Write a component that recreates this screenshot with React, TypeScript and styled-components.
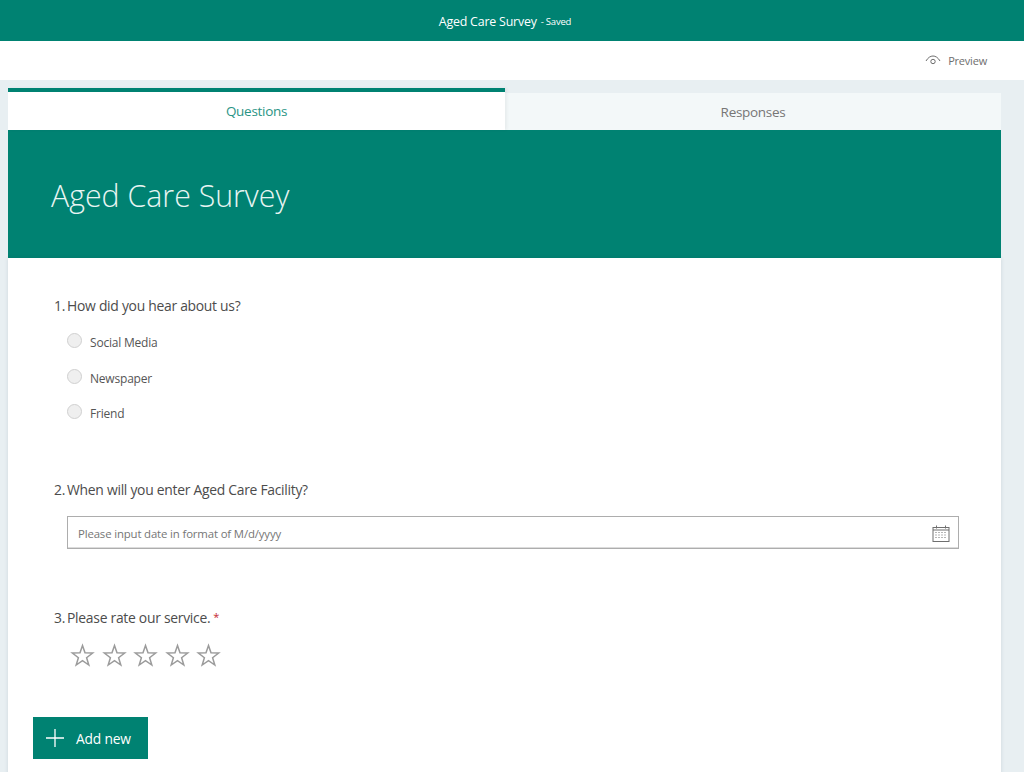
import styled, { createGlobalStyle } from "styled-components";

const TEAL = "#008272";

const Global = createGlobalStyle`
  html, body {
    margin: 0;
    height: 772px;
    overflow: hidden;
    background: #e8eff2;
    font-family: "Open Sans", "Noto Sans", sans-serif;
  }
`;

const TopBar = styled.header`
  height: 41px;
  background: ${TEAL};
  color: #fff;
  display: flex;
  align-items: center;
  justify-content: center;
  padding: 2px 14px 0 0;
  box-sizing: border-box;
  font-size: 12.4px;
  letter-spacing: -0.2px;
`;

const Saved = styled.span`
  font-size: 9.5px;
  margin-left: 4px;
`;

const ActionBar = styled.div`
  height: 39px;
  background: #fff;
  display: flex;
  align-items: center;
  justify-content: flex-end;
  padding-right: 37px;
`;

const PreviewLink = styled.a`
  display: flex;
  align-items: center;
  gap: 7px;
  color: #6e6e6e;
  font-size: 11px;
  letter-spacing: -0.2px;
`;

const Page = styled.main`
  width: 993px;
  margin: 8px 0 0 8px;
`;

const Tabs = styled.nav`
  display: flex;
  align-items: flex-end;
  height: 42px;
`;

const Tab = styled.div<{ $active?: boolean }>`
  flex: ${(p) => (p.$active ? "0 0 497px" : "1")};
  height: ${(p) => (p.$active ? "38px" : "37px")};
  border-top: ${(p) => (p.$active ? `4px solid ${TEAL}` : "0")};
  background: ${(p) => (p.$active ? "#fff" : "#f3f8f9")};
  color: ${(p) => (p.$active ? "#2a9485" : "#767676")};
  box-shadow: ${(p) => (p.$active ? "2px 0 3px rgba(0, 0, 0, 0.05)" : "none")};
  position: relative;
  z-index: ${(p) => (p.$active ? 1 : 0)};
  display: flex;
  align-items: center;
  justify-content: center;
  font-size: 13.5px;
  letter-spacing: -0.3px;
`;

const Banner = styled.div`
  height: 128px;
  background: ${TEAL};
  display: flex;
  align-items: center;
  padding: 2px 0 0 43px;
  box-sizing: border-box;
  color: #e8f5f2;
`;

const Title = styled.h1`
  margin: 0;
  font-size: 30.3px;
  font-weight: 300;
  letter-spacing: 0;
`;

const Body = styled.div`
  background: #fff;
  height: 520px;
  padding: 36px 42px 0 25px;
  box-sizing: border-box;
  box-shadow: 0 0 4px rgba(0, 60, 70, 0.12);
`;

const Question = styled.section<{ $height: number }>`
  height: ${(p) => p.$height}px;
`;

const Label = styled.div`
  display: flex;
  height: 22px;
  align-items: center;
  margin-left: 21px;
  color: #4c4c4c;
  font-size: 13.9px;
  letter-spacing: -0.28px;
`;

const Num = styled.span`
  margin-right: 2px;
`;

const Required = styled.span`
  color: #c4262e;
  font-size: 11px;
  margin: -2px 0 0 3px;
`;

const Options = styled.div`
  margin: 16px 0 0 34px;
  display: flex;
  flex-direction: column;
  gap: 14px;
`;

const Option = styled.label`
  display: flex;
  align-items: center;
  height: 21.5px;
  color: #555;
  font-size: 12px;
  letter-spacing: -0.2px;
`;

const Radio = styled.span`
  width: 13px;
  height: 13px;
  border-radius: 50%;
  background: #efefef;
  border: 1px solid #d0d0d0;
  margin: -4px 8px 0 0;
`;

const DateField = styled.div`
  margin: 16px 0 0 34px;
  height: 33px;
  box-sizing: border-box;
  border: 1px solid #adadad;
  box-shadow: inset 0 -1px 0 #dcdcdc;
  display: flex;
  align-items: center;
  justify-content: space-between;
  padding: 1px 8px 0 10px;
  color: #767676;
  font-size: 11.4px;
  letter-spacing: -0.15px;
`;

const Stars = styled.div`
  margin: 15px 0 0 37px;
  display: flex;
  gap: 6.6px;
`;

const AddButton = styled.button`
  width: 115px;
  height: 42px;
  border: 0;
  background: ${TEAL};
  color: #fff;
  display: flex;
  align-items: center;
  padding: 0 0 0 13px;
  gap: 12px;
  font-family: inherit;
  font-size: 13.8px;
  letter-spacing: -0.2px;
`;

const Star = () => (
  <svg width="25" height="25" viewBox="0 0 25 25" fill="none" stroke="#9b9b9b" strokeWidth="1.5">
    <path d="M12.5 2.5 L15 9.8 L22.7 10 L16.6 14.7 L18.8 22 L12.5 17.7 L6.2 22 L8.4 14.7 L2.3 10 L10 9.8 Z" />
  </svg>
);

const EyeIcon = () => (
  <svg width="16" height="12" viewBox="0 0 16 12" fill="none" stroke="#6e6e6e" strokeWidth="1">
    <path d="M1 6 C3 2.5 5.5 1 8 1 C10.5 1 13 2.5 15 6" />
    <circle cx="8" cy="6.5" r="2.2" />
  </svg>
);

const CalendarIcon = () => (
  <svg width="18" height="17" viewBox="0 0 18 17" fill="none">
    <rect x="1" y="2.5" width="16" height="14" stroke="#6f6f6f" />
    <path d="M1 5h16" stroke="#6f6f6f" />
    <path d="M4.5 0.5v3M13.5 0.5v3" stroke="#6f6f6f" />
    <path d="M3 7.5h12M3 10h12M3 12.5h12" stroke="#b5b5b5" strokeDasharray="2 1" />
  </svg>
);

const PlusIcon = () => (
  <svg width="18" height="18" viewBox="0 0 18 18" stroke="#fff" strokeWidth="1.3">
    <path d="M9 0v18M0 9h18" />
  </svg>
);

export default function App() {
  return (
    <>
      <Global />
      <TopBar>
        Aged Care Survey <Saved>- Saved</Saved>
      </TopBar>
      <ActionBar>
        <PreviewLink>
          <EyeIcon />
          Preview
        </PreviewLink>
      </ActionBar>
      <Page>
        <Tabs>
          <Tab $active>Questions</Tab>
          <Tab>Responses</Tab>
        </Tabs>
        <Banner>
          <Title>Aged Care Survey</Title>
        </Banner>
        <Body>
          <Question $height={184}>
            <Label>
              <Num>1.</Num>How did you hear about us?
            </Label>
            <Options>
              <Option><Radio />Social Media</Option>
              <Option><Radio />Newspaper</Option>
              <Option><Radio />Friend</Option>
            </Options>
          </Question>
          <Question $height={128}>
            <Label>
              <Num>2.</Num>When will you enter Aged Care Facility?
            </Label>
            <DateField>
              Please input date in format of M/d/yyyy
              <CalendarIcon />
            </DateField>
          </Question>
          <Question $height={111}>
            <Label>
              <Num>3.</Num>Please rate our service.<Required>*</Required>
            </Label>
            <Stars>
              <Star /><Star /><Star /><Star /><Star />
            </Stars>
          </Question>
          <AddButton>
            <PlusIcon />
            Add new
          </AddButton>
        </Body>
      </Page>
    </>
  );
}
